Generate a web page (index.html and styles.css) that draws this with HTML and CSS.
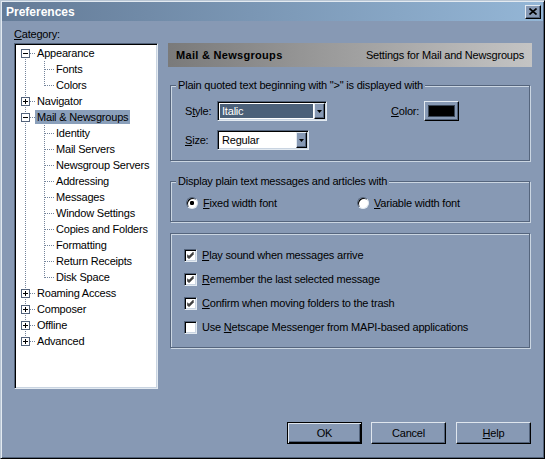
FILE: index.html
```html
<!DOCTYPE html>
<html>
<head>
<meta charset="utf-8">
<title>Preferences</title>
<link rel="stylesheet" href="styles.css">
</head>
<body>
<div class="window">
  <div class="titlebar">
    <span class="title">Preferences</span>
    <span class="close"><svg width="8" height="7" viewBox="0 0 8 7"><path d="M0.5 0.5L7.5 6.5M7.5 0.5L0.5 6.5" stroke="#000" stroke-width="1.6"/></svg></span>
  </div>
  <div class="main">
    <div class="leftcol">
      <div class="catlabel"><u>C</u>ategory:</div>
      <div class="tree">
        <div class="row"><span class="g1 top first"><i class="box minus"></i></span><span class="lbl">Appearance</span></div>
        <div class="row"><span class="g1 vline"></span><span class="g2 mid"></span><span class="lbl">Fonts</span></div>
        <div class="row"><span class="g1 vline"></span><span class="g2 end"></span><span class="lbl">Colors</span></div>
        <div class="row"><span class="g1 top"><i class="box plus"></i></span><span class="lbl">Navigator</span></div>
        <div class="row"><span class="g1 top"><i class="box minus"></i></span><span class="lbl sel">Mail &amp; Newsgroups</span></div>
        <div class="row"><span class="g1 vline"></span><span class="g2 mid"></span><span class="lbl">Identity</span></div>
        <div class="row"><span class="g1 vline"></span><span class="g2 mid"></span><span class="lbl">Mail Servers</span></div>
        <div class="row"><span class="g1 vline"></span><span class="g2 mid"></span><span class="lbl">Newsgroup Servers</span></div>
        <div class="row"><span class="g1 vline"></span><span class="g2 mid"></span><span class="lbl">Addressing</span></div>
        <div class="row"><span class="g1 vline"></span><span class="g2 mid"></span><span class="lbl">Messages</span></div>
        <div class="row"><span class="g1 vline"></span><span class="g2 mid"></span><span class="lbl">Window Settings</span></div>
        <div class="row"><span class="g1 vline"></span><span class="g2 mid"></span><span class="lbl">Copies and Folders</span></div>
        <div class="row"><span class="g1 vline"></span><span class="g2 mid"></span><span class="lbl">Formatting</span></div>
        <div class="row"><span class="g1 vline"></span><span class="g2 mid"></span><span class="lbl">Return Receipts</span></div>
        <div class="row"><span class="g1 vline"></span><span class="g2 end"></span><span class="lbl">Disk Space</span></div>
        <div class="row"><span class="g1 top"><i class="box plus"></i></span><span class="lbl">Roaming Access</span></div>
        <div class="row"><span class="g1 top"><i class="box plus"></i></span><span class="lbl">Composer</span></div>
        <div class="row"><span class="g1 top"><i class="box plus"></i></span><span class="lbl">Offline</span></div>
        <div class="row"><span class="g1 top last"><i class="box plus"></i></span><span class="lbl">Advanced</span></div>
      </div>
    </div>
    <div class="rightcol">
      <div class="header">
        <span class="htitle">Mail &amp; Newsgroups</span>
        <span class="hsub">Settings for Mail and Newsgroups</span>
      </div>
      <fieldset class="group g-quoted">
        <legend>Plain quoted text beginning with "&gt;" is displayed with</legend>
        <div class="gbody quoted">
          <div class="frow">
            <span class="flabel">S<u>t</u>yle:</span>
            <span class="combo wide"><span class="val selval">Italic</span><span class="arrow"><svg width="5" height="3" viewBox="0 0 5 3"><path d="M0 0H5L2.5 3Z"/></svg></span></span>
            <span class="flabel colorlabel"><u>C</u>olor:</span>
            <span class="colorbtn"><span class="swatch"></span></span>
          </div>
          <div class="frow">
            <span class="flabel"><u>S</u>ize:</span>
            <span class="combo narrow"><span class="val">Regular</span><span class="arrow"><svg width="5" height="3" viewBox="0 0 5 3"><path d="M0 0H5L2.5 3Z"/></svg></span></span>
          </div>
        </div>
      </fieldset>
      <fieldset class="group g-display">
        <legend>Display plain text messages and articles with</legend>
        <div class="gbody radios">
          <span class="ritem first"><i class="radio on"></i><span><u>F</u>ixed width font</span></span>
          <span class="ritem"><i class="radio"></i><span><u>V</u>ariable width font</span></span>
        </div>
      </fieldset>
      <div class="group g-checks">
        <div class="crow"><i class="check on"><svg width="7" height="7" viewBox="0 0 7 7"><path d="M0 2.5L2 4.5L6.5 0M0 3.5L2 5.5L6.5 1M0 4.5L2 6.5L6.5 2" stroke="#000" fill="none"/></svg></i><span><u>P</u>lay sound when messages arrive</span></div>
        <div class="crow"><i class="check on"><svg width="7" height="7" viewBox="0 0 7 7"><path d="M0 2.5L2 4.5L6.5 0M0 3.5L2 5.5L6.5 1M0 4.5L2 6.5L6.5 2" stroke="#000" fill="none"/></svg></i><span><u>R</u>emember the last selected message</span></div>
        <div class="crow"><i class="check on"><svg width="7" height="7" viewBox="0 0 7 7"><path d="M0 2.5L2 4.5L6.5 0M0 3.5L2 5.5L6.5 1M0 4.5L2 6.5L6.5 2" stroke="#000" fill="none"/></svg></i><span><u>C</u>onfirm when moving folders to the trash</span></div>
        <div class="crow"><i class="check"></i><span>Use <u>N</u>etscape Messenger from MAPI-based applications</span></div>
      </div>
    </div>
  </div>
  <div class="footer">
    <span class="btn default">OK</span>
    <span class="btn">Cancel</span>
    <span class="btn help"><u>H</u>elp</span>
  </div>
</div>
</body>
</html>
```

FILE: styles.css
```css
html, body {
  margin: 0;
  padding: 0;
  background: #8799b4;
}
body {
  font-family: "Liberation Sans", Arial, sans-serif;
  font-size: 11px;
  letter-spacing: -0.2px;
  color: #000;
}
u { text-decoration: underline; text-underline-offset: 1px; }

.window {
  box-sizing: border-box;
  width: 545px;
  height: 459px;
  border: 1px solid;
  border-color: #b9c6d4 #000 #000 #b9c6d4;
  box-shadow: inset 1px 1px 0 #e3eaf1, inset -1px -1px 0 #52627a;
  padding: 1px;
  display: flex;
  flex-direction: column;
  background: #8799b4;
}

.titlebar {
  height: 19px;
  flex: none;
  display: flex;
  align-items: center;
  justify-content: space-between;
  padding: 0 2px 0 4px;
  background: linear-gradient(to right, #647b97, #94b6d6);
}
.title {
  color: #fff;
  font-weight: bold;
  font-size: 12px;
  line-height: 14px;
  letter-spacing: 0;
}
.close {
  box-sizing: border-box;
  width: 16px;
  height: 14px;
  display: flex;
  align-items: center;
  justify-content: center;
  background: #8799b4;
  border: 1px solid;
  border-color: #e3eaf1 #000 #000 #e3eaf1;
  box-shadow: inset -1px -1px 0 #52627a;
}

.main {
  display: flex;
  align-items: flex-start;
  padding: 0 11px 0 12px;
}

.leftcol {
  width: 144px;
  padding-top: 7px;
}
.catlabel {
  line-height: 13px;
  height: 13px;
  margin-bottom: 2px;
}
.tree {
  box-sizing: border-box;
  height: 346px;
  background: #fff;
  border: 1px solid;
  border-color: #52627a #e3eaf1 #e3eaf1 #52627a;
  box-shadow: inset 1px 1px 0 #000, inset -1px -1px 0 #c9d4e1;
  padding: 1px;
}
.row {
  display: flex;
  height: 16px;
  align-items: center;
}
.g1, .g2 {
  flex: none;
  width: 19px;
  height: 16px;
  box-sizing: border-box;
  background-repeat: no-repeat;
}
.g1 {
  padding: 4px 0 0 5px;
}
.g1.vline {
  background-image: repeating-linear-gradient(to bottom, #74849b 0 1px, transparent 1px 2px);
  background-size: 1px 16px;
  background-position: 9px 0;
}
.g1.top {
  background-image:
    repeating-linear-gradient(to bottom, #74849b 0 1px, transparent 1px 2px),
    repeating-linear-gradient(to right, #74849b 0 1px, transparent 1px 2px);
  background-size: 1px 16px, 5px 1px;
  background-position: 9px 0, 14px 8px;
}
.g1.top.first {
  background-size: 1px 8px, 5px 1px;
  background-position: 9px 8px, 14px 8px;
}
.g1.top.last {
  background-size: 1px 8px, 5px 1px;
  background-position: 9px 0, 14px 8px;
}
.g2.mid {
  background-image:
    repeating-linear-gradient(to bottom, #74849b 0 1px, transparent 1px 2px),
    repeating-linear-gradient(to right, #74849b 0 1px, transparent 1px 2px);
  background-size: 1px 16px, 9px 1px;
  background-position: 9px 0, 10px 8px;
}
.g2.end {
  background-image:
    repeating-linear-gradient(to bottom, #74849b 0 1px, transparent 1px 2px),
    repeating-linear-gradient(to right, #74849b 0 1px, transparent 1px 2px);
  background-size: 1px 9px, 9px 1px;
  background-position: 9px 0, 10px 8px;
}
.box {
  display: block;
  box-sizing: border-box;
  width: 9px;
  height: 9px;
  border: 1px solid #52627a;
  background-color: #fff;
  background-repeat: no-repeat;
}
.box.minus {
  background-image: linear-gradient(#000, #000);
  background-size: 5px 1px;
  background-position: 1px 3px;
}
.box.plus {
  background-image: linear-gradient(#000, #000), linear-gradient(#000, #000);
  background-size: 5px 1px, 1px 5px;
  background-position: 1px 3px, 3px 1px;
}
.lbl {
  line-height: 14px;
  padding: 0 2px;
  white-space: nowrap;
}
.lbl.sel {
  background: #8a9fba;
}

.rightcol {
  width: 364px;
  margin: 22px 0 0 10px;
}
.header {
  height: 24px;
  display: flex;
  align-items: center;
  justify-content: space-between;
  padding: 0 8px;
  background: linear-gradient(to right, #7a7a7a, #c4c4c4);
}
.htitle { font-weight: bold; letter-spacing: 0.3px; }

.group {
  box-sizing: border-box;
  margin: 0 2px 0 2px;
  padding: 0;
  min-width: 0;
  border: 1px solid #55657d;
  box-shadow: inset 1px 1px 0 #cbd6e2, 1px 1px 0 #cbd6e2;
}
.group legend {
  margin-left: 5px;
  padding: 0 2px;
  line-height: 13px;
  background: #8799b4;
}
.g-quoted { margin-top: 12px; }
.g-display { margin-top: 14px; }
.g-checks { margin-top: 11px; height: 115px; padding: 9px 0 0 13px; }

.quoted {
  padding: 9px 0 10px 14px;
  display: flex;
  flex-direction: column;
  gap: 9px;
}
.frow {
  display: flex;
  align-items: center;
  height: 20px;
}
.flabel {
  width: 32px;
  flex: none;
}
.colorlabel {
  width: 33px;
  margin-left: 64px;
}
.combo {
  box-sizing: border-box;
  height: 20px;
  display: flex;
  padding: 1px;
  background: #fff;
  border: 1px solid;
  border-color: #52627a #e3eaf1 #e3eaf1 #52627a;
  box-shadow: inset 1px 1px 0 #000, inset -1px -1px 0 #c9d4e1;
}
.combo.wide { width: 110px; }
.combo.narrow { width: 92px; }
.val {
  flex: 1;
  margin: 1px;
  line-height: 14px;
  padding-left: 2px;
}
.selval {
  background: #4b6079;
  color: #fff;
  outline: 1px solid #fff;
}
.arrow {
  box-sizing: border-box;
  width: 11px;
  height: 16px;
  display: flex;
  align-items: center;
  justify-content: center;
  background: #8799b4;
  border: 1px solid;
  border-color: #e3eaf1 #000 #000 #e3eaf1;
  box-shadow: inset -1px -1px 0 #52627a;
}
.colorbtn {
  box-sizing: border-box;
  width: 35px;
  height: 20px;
  padding: 3px;
  border: 1px solid;
  border-color: #e3eaf1 #000 #000 #e3eaf1;
  box-shadow: inset -1px -1px 0 #52627a;
  display: flex;
}
.swatch {
  flex: 1;
  background: #000;
  border: 1px solid #3a4656;
}

.radios {
  display: flex;
  align-items: center;
  padding: 8px 0 12px 15px;
  height: 13px;
}
.ritem {
  display: flex;
  align-items: center;
  gap: 5px;
}
.ritem.first { width: 171px; flex: none; }
.radio {
  box-sizing: border-box;
  width: 12px;
  height: 12px;
  border-radius: 50%;
  border: 1px solid;
  border-color: #52627a #e3eaf1 #e3eaf1 #52627a;
  box-shadow: inset 1px 1px 0 #000;
  background: #fff;
}
.radio.on {
  background: radial-gradient(circle at 50% 50%, #000 0 2px, #fff 2.3px);
}

.crow {
  display: flex;
  align-items: center;
  height: 24px;
  gap: 5px;
}
.check {
  box-sizing: border-box;
  width: 13px;
  height: 13px;
  display: flex;
  align-items: center;
  justify-content: center;
  background: #fff;
  border: 1px solid;
  border-color: #52627a #e3eaf1 #e3eaf1 #52627a;
  box-shadow: inset 1px 1px 0 #000, inset -1px -1px 0 #c9d4e1;
}

.footer {
  margin-top: auto;
  display: flex;
  justify-content: flex-end;
  gap: 9px;
  padding: 0 12px 13px 0;
}
.btn {
  box-sizing: border-box;
  width: 75px;
  height: 22px;
  display: flex;
  align-items: center;
  justify-content: center;
  border: 1px solid;
  border-color: #dfe6ee #000 #000 #dfe6ee;
  box-shadow: inset -1px -1px 0 #52627a;
}
.btn.default {
  border-color: #000;
  box-shadow: inset 1px 1px 0 #dfe6ee, inset -1px -1px 0 #000, inset -2px -2px 0 #52627a;
}
.btn.help { margin-left: 1px; }
```
